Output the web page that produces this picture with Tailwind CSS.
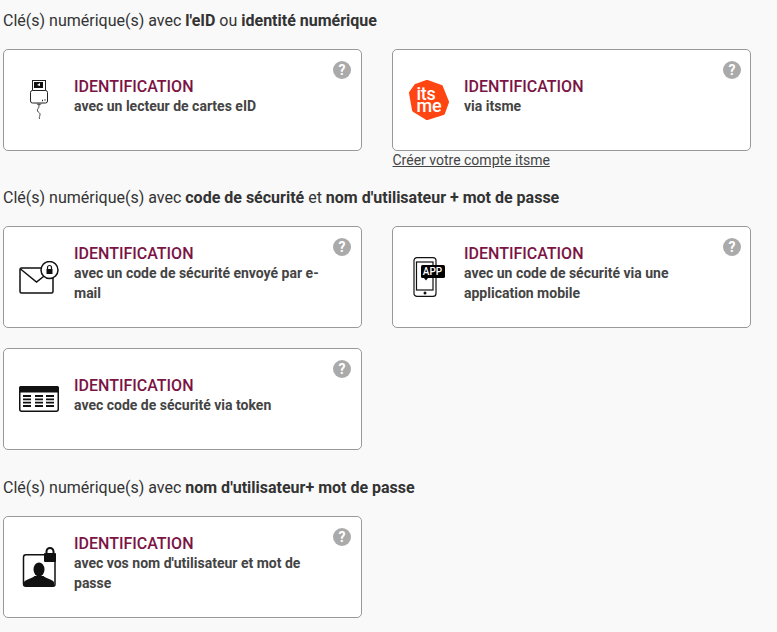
<!DOCTYPE html>
<html lang="fr">
<head>
  <meta charset="UTF-8" />
  <title>Clés numériques</title>
  <script src="https://cdn.jsdelivr.net/npm/@tailwindcss/browser@4"></script>
</head>
<body class="bg-[#f9f9f9] font-['Roboto',sans-serif] text-[#333] h-[632px] overflow-hidden pl-[3px] pt-[11px]">

  <!-- eID -->
  <h2 class="text-[16px] leading-[20px] font-normal">Clé(s) numérique(s) avec <b class="font-bold">l'eID</b> ou <b class="font-bold">identité numérique</b></h2>
  <div class="grid grid-cols-[359px_359px] gap-x-[30px] mt-[18px] mb-[18px]">
    <a class="relative flex bg-white border border-[#999] rounded-[5px] h-[102px]">
      <span class="w-[70px] shrink-0 flex items-center justify-center">
        <svg width="24" height="42" viewBox="0 0 24 42" fill="none" stroke="#222" stroke-width="1">
          <rect x="5.500" y="1.500" width="13" height="10" fill="#fff"/>
          <rect x="7" y="3" width="9" height="6" fill="#111" stroke="none"/>
          <path d="M10 6l3-2v3z" fill="#fff" stroke="none"/>
          <rect x="3.500" y="11.500" width="17" height="12.500" rx="2" fill="#fff"/>
          <path d="M15 21.500h1M18 20.500v1" stroke-width="1.400"/>
          <path d="M9 24.500h6l-3 2.500z" fill="#555" stroke="none"/>
          <path d="M12 27c0 3-2.500 3-1.500 5s3 1.500 2.500 4-1 2-.5 4" stroke-width=".8"/>
        </svg>
      </span>
      <span class="self-center mb-[8px] block">
        <span class="block text-[16px] leading-[19px] pt-[1px] font-medium text-[#7b1444]">IDENTIFICATION</span>
        <span class="block text-[14px] leading-[20px] font-bold text-[#444]">avec un lecteur de cartes eID</span>
      </span>
      <span class="absolute top-[11px] right-[10px] w-[18px] h-[18px] rounded-full bg-[#aaa] text-white text-[14px] leading-[18px] font-bold text-center">?</span>
    </a>
    <div>
      <a class="relative flex bg-white border border-[#999] rounded-[5px] h-[102px]">
        <span class="w-[71px] shrink-0 flex items-center justify-center">
          <span class="relative block w-[40px] h-[40px]">
            <svg class="absolute inset-0" width="40" height="40" viewBox="0 0 40 40">
              <path d="M18 2L32 7L38 22L34 33L18 38L5 30L2 13L7 6Z" fill="#ff4612" stroke="#ff4612" stroke-width="4" stroke-linejoin="round"/>
            </svg>
            <span class="absolute left-[8px] top-[8px] text-white font-medium text-[18px] leading-[12px]">
              <span class="block tracking-[-.3px]">its</span>
              <span class="block tracking-[-.3px]">me</span>
            </span>
          </span>
        </span>
        <span class="self-center mb-[8px] block">
          <span class="block text-[16px] leading-[19px] pt-[1px] font-medium text-[#7b1444]">IDENTIFICATION</span>
          <span class="block text-[14px] leading-[20px] font-bold text-[#444]">via itsme</span>
        </span>
        <span class="absolute top-[11px] right-[9px] w-[18px] h-[18px] rounded-full bg-[#aaa] text-white text-[14px] leading-[18px] font-bold text-center">?</span>
      </a>
      <a class="block text-[14px] leading-[19px] underline text-[#444] ml-[.5px]">Créer votre compte itsme</a>
    </div>
  </div>

  <!-- code de sécurité -->
  <h2 class="text-[16px] leading-[20px] font-normal">Clé(s) numérique(s) avec <b class="font-bold">code de sécurité</b> et <b class="font-bold">nom d'utilisateur + mot de passe</b></h2>
  <div class="grid grid-cols-[359px_359px] gap-x-[30px] gap-y-[20px] mt-[18px] mb-[28px]">
    <a class="relative flex bg-white border border-[#999] rounded-[5px] h-[102px]">
      <span class="w-[70px] shrink-0 flex items-center justify-center">
        <svg width="40" height="33" viewBox="0 0 40 33" fill="none" stroke="#111" stroke-width="1.500">
          <rect x="1" y="7" width="33" height="25" rx="1.500"/>
          <path d="M1.500 8L17.500 21L34 8"/>
          <circle cx="30.500" cy="9" r="8.500" fill="#fff"/>
          <path d="M28.500 8.500V6.500a2 2 0 0 1 4 0V8.500" stroke-width="1.200"/>
          <rect x="27.500" y="8" width="6" height="5" rx=".5" fill="#111" stroke="none"/>
        </svg>
      </span>
      <span class="self-center mb-[8px] block w-[250px]">
        <span class="block text-[16px] leading-[19px] pt-[1px] font-medium text-[#7b1444]">IDENTIFICATION</span>
        <span class="block text-[14px] leading-[20px] font-bold text-[#444]">avec un code de sécurité envoyé par e-mail</span>
      </span>
      <span class="absolute top-[11px] right-[10px] w-[18px] h-[18px] rounded-full bg-[#aaa] text-white text-[14px] leading-[18px] font-bold text-center">?</span>
    </a>
    <a class="relative flex bg-white border border-[#999] rounded-[5px] h-[102px]">
      <span class="w-[71px] shrink-0 flex items-center justify-center">
        <span class="relative block w-[32px] h-[40px]">
          <svg class="absolute inset-0" width="32" height="40" viewBox="0 0 32 40" fill="none" stroke="#111" stroke-width="1.200">
            <rect x="1" y=".6" width="22" height="38.800" rx="3"/>
            <rect x="3.500" y="5" width="16.500" height="28"/>
            <circle cx="12" cy="36" r="1.500" fill="#111" stroke="none"/>
            <rect x="8" y="8" width="24" height="13" rx="1.500" fill="#000" stroke="none"/>
            <path d="M11 21h4l-2 2.500z" fill="#000" stroke="none"/>
          </svg>
          <span class="absolute left-[8px] top-[8px] w-[24px] text-center text-white text-[10px] leading-[13px] font-medium">APP</span>
        </span>
      </span>
      <span class="self-center mb-[8px] block w-[250px]">
        <span class="block text-[16px] leading-[19px] pt-[1px] font-medium text-[#7b1444]">IDENTIFICATION</span>
        <span class="block text-[14px] leading-[20px] font-bold text-[#444]">avec un code de sécurité via une application mobile</span>
      </span>
      <span class="absolute top-[11px] right-[9px] w-[18px] h-[18px] rounded-full bg-[#aaa] text-white text-[14px] leading-[18px] font-bold text-center">?</span>
    </a>
    <a class="relative flex bg-white border border-[#999] rounded-[5px] h-[102px]">
      <span class="w-[70px] shrink-0 flex items-center justify-center">
        <svg width="40" height="26" viewBox="0 0 40 26" fill="none">
          <rect x=".75" y=".75" width="38.500" height="24.500" rx="2" stroke="#111" stroke-width="1.500"/>
          <path d="M2 0h36a2 2 0 0 1 2 2v4.500H0V2a2 2 0 0 1 2-2z" fill="#111"/>
          <path d="M4 10h8M4 13.300h8M4 16.700h8M4 20h8M16 10h8M16 13.300h8M16 16.700h8M16 20h8M27 10h8M27 13.300h8M27 16.700h8M27 20h8" stroke="#111" stroke-width="1.800"/>
        </svg>
      </span>
      <span class="self-center mb-[8px] block">
        <span class="block text-[16px] leading-[19px] pt-[1px] font-medium text-[#7b1444]">IDENTIFICATION</span>
        <span class="block text-[14px] leading-[20px] font-bold text-[#444]">avec code de sécurité via token</span>
      </span>
      <span class="absolute top-[11px] right-[10px] w-[18px] h-[18px] rounded-full bg-[#aaa] text-white text-[14px] leading-[18px] font-bold text-center">?</span>
    </a>
  </div>

  <!-- nom d'utilisateur -->
  <h2 class="text-[16px] leading-[20px] font-normal">Clé(s) numérique(s) avec <b class="font-bold">nom d'utilisateur+ mot de passe</b></h2>
  <div class="grid grid-cols-[359px_359px] gap-x-[30px] mt-[18px]">
    <a class="relative flex bg-white border border-[#999] rounded-[5px] h-[102px]">
      <span class="w-[70px] shrink-0 flex items-center justify-center">
        <svg width="36" height="40" viewBox="0 0 36 40" fill="none">
          <path d="M23 7.750H5a2.500 2.500 0 0 0-2.500 2.500V37a2.250 2.250 0 0 0 2.250 2.250H32a2 2 0 0 0 2-2V14" stroke="#111" stroke-width="1.500"/>
          <path d="M25.500 7V4.500a3.500 3.500 0 0 1 7 0V7" stroke="#111" stroke-width="2"/>
          <rect x="23" y="6" width="12" height="9" rx="1" fill="#111"/>
          <ellipse cx="18" cy="22.500" rx="5.500" ry="7" fill="#111"/>
          <path d="M3 39v-3.500c0-3 8-3.500 10.500-6.500h9c2.500 3 10.500 3.500 10.500 6.500V39z" fill="#111"/>
        </svg>
      </span>
      <span class="self-center mb-[8px] block w-[250px]">
        <span class="block text-[16px] leading-[19px] pt-[1px] font-medium text-[#7b1444]">IDENTIFICATION</span>
        <span class="block text-[14px] leading-[20px] font-bold text-[#444]">avec vos nom d'utilisateur et mot de passe</span>
      </span>
      <span class="absolute top-[11px] right-[10px] w-[18px] h-[18px] rounded-full bg-[#aaa] text-white text-[14px] leading-[18px] font-bold text-center">?</span>
    </a>
  </div>
</body>
</html>
